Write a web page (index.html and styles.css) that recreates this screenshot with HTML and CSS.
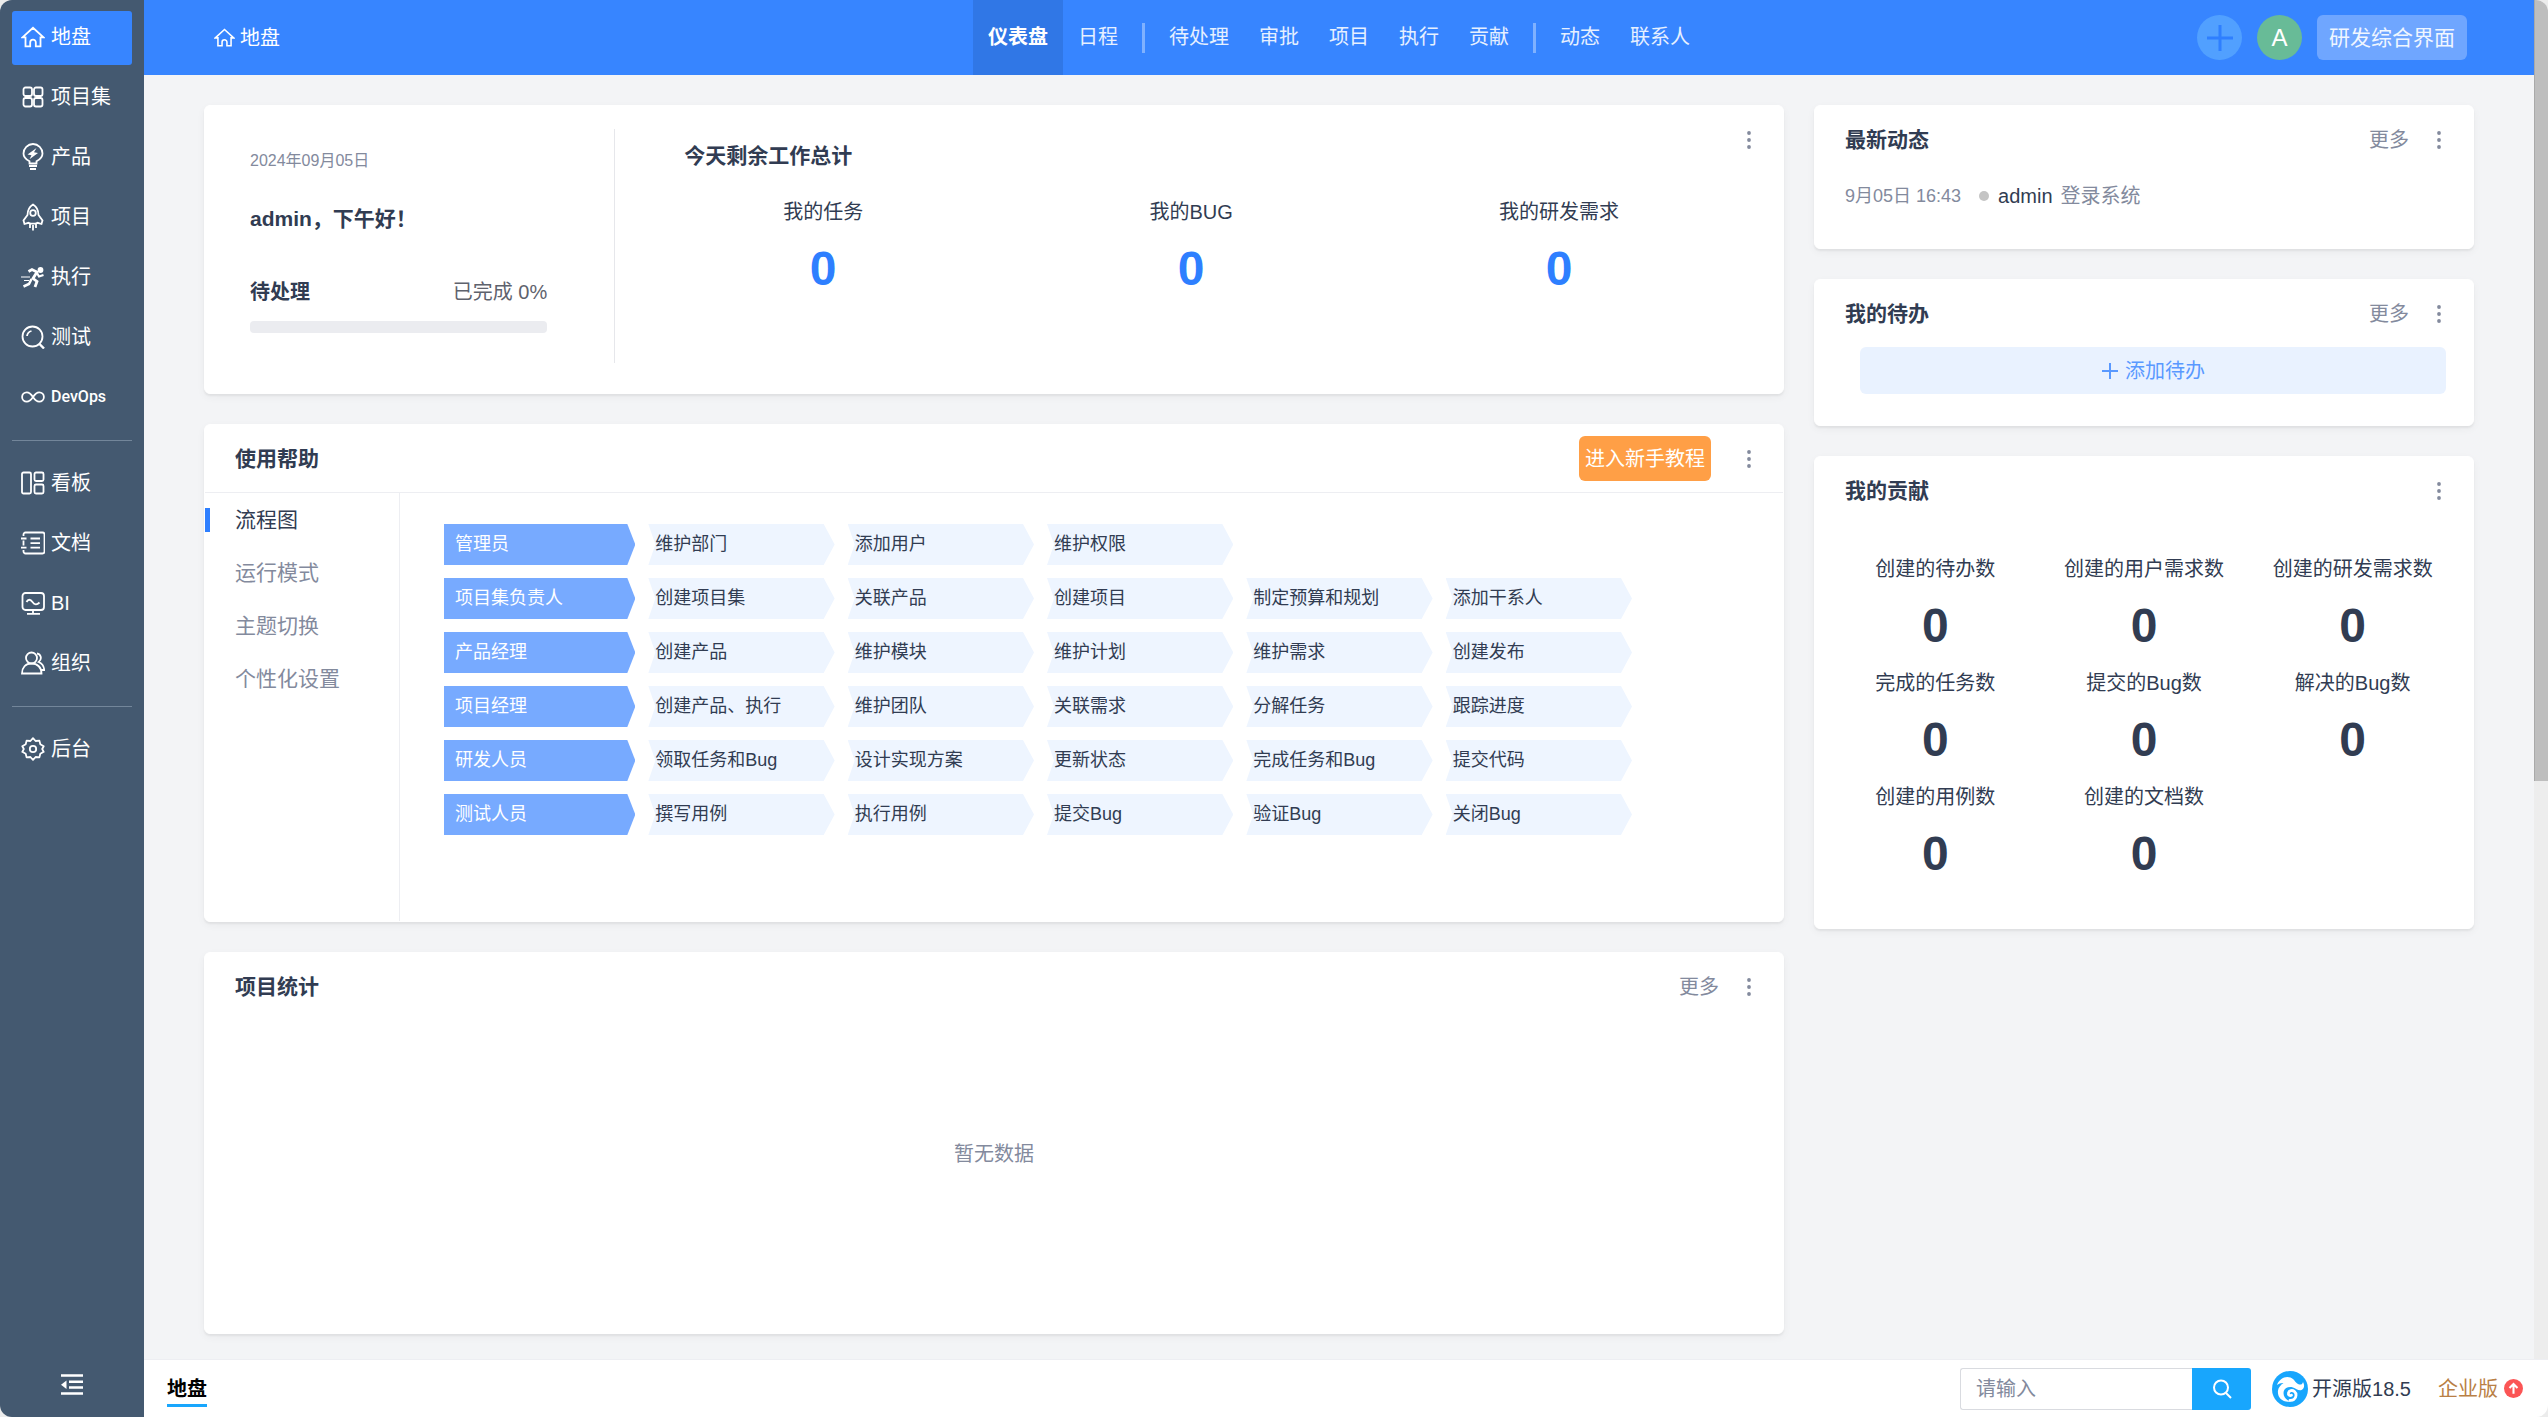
FILE: index.html
```html
<!DOCTYPE html>
<html lang="zh-CN">
<head>
<meta charset="utf-8">
<meta name="viewport" content="width=device-width, initial-scale=1">
<title>地盘 - 仪表盘</title>
<link rel="stylesheet" href="styles.css">
</head>
<body>
<svg class="sprite" aria-hidden="true">
  <symbol id="i-home" viewBox="0 0 24 24"><path d="M1.5 12.4 12 2.8l10.5 9.6h-3v9h-4.7v-4a2.8 2.8 0 0 0-5.6 0v4H4.500v-9z"/></symbol>
  <symbol id="i-program" viewBox="0 0 24 24"><rect x="2.500" y="2.500" width="8.500" height="8.500" rx="2"/><rect x="13" y="2.500" width="8.500" height="8.500" rx="2"/><rect x="2.500" y="13" width="8.500" height="8.500" rx="2"/><rect x="13" y="13" width="8.500" height="8.500" rx="2"/></symbol>
  <symbol id="i-kebab" viewBox="0 0 6 20"><g fill="currentColor" stroke="none"><circle cx="3" cy="3" r="1.900"/><circle cx="3" cy="10" r="1.900"/><circle cx="3" cy="17" r="1.900"/></g></symbol>
</svg>
<div class="shell">
  <aside class="sidebar">
    <nav aria-label="主导航">
      <ul class="side-list">
        <li><a class="side-link active" href="#"><svg class="icon"><use href="#i-home"/></svg>地盘</a></li>
        <li><a class="side-link" href="#"><svg class="icon"><use href="#i-program"/></svg>项目集</a></li>
        <li><a class="side-link" href="#"><svg class="icon tall" viewBox="0 0 24 28"><path d="M8.500 20.500v-2.200C5 16.500 2.500 14 2.500 10.500a9.500 9.500 0 0 1 19 0c0 3.500-2.500 6-6 7.800v2.200z"/><path d="M8 23h8M9 26h6"/><path class="solid" d="M15.500 5 6.500 11.500l4 .8-2 4L17 10l-4-.8z"/></svg>产品</a></li>
        <li><a class="side-link" href="#"><svg class="icon tall" viewBox="0 0 24 28"><path d="M12 1.500c4 2.500 5.500 6.500 5.500 10.500l4 5.500-1 3.500-4-1.200c-3 1.200-6 1.200-9 0L3.500 21l-1-3.500 4-5.500C6.500 8 8 4 12 1.500z"/><circle cx="12" cy="10" r="2.800"/><path d="M9 21v4M12 22v5.500M15 21v4"/></svg>项目</a></li>
        <li><a class="side-link" href="#"><svg class="icon" viewBox="0 0 24 24"><circle class="solid" cx="19.500" cy="5" r="2.900"/><path d="M7.500 6.500 11 4.500l5 2.500-4 6.500 4 3-2 5.500" stroke-width="2.800"/><path d="m10.500 14-2.500 5-5.500 2.500" stroke-width="2.500"/><path d="m16 8 2 3.500 4.500-1.500" stroke-width="2.200"/><path d="M0 12h9M3 15.500h5" stroke-width="1.200"/></svg>执行</a></li>
        <li><a class="side-link" href="#"><svg class="icon" viewBox="0 0 24 24"><circle cx="11.500" cy="11.500" r="10"/><path d="m18.500 19 4.500 4.500" stroke-width="2.400"/><path d="M6 11a6 6 0 0 1 4.500-5"/></svg>测试</a></li>
        <li><a class="side-link latin" href="#"><svg class="icon" viewBox="0 0 24 24"><path d="M12 12c-2-3-3.800-4.700-6.200-4.700a4.700 4.700 0 0 0 0 9.400c2.400 0 4.200-1.700 6.200-4.700s3.800-4.700 6.200-4.700a4.700 4.700 0 0 1 0 9.400c-2.400 0-4.200-1.700-6.200-4.700z"/></svg>DevOps</a></li>
      </ul>
      <ul class="side-list">
        <li><a class="side-link" href="#"><svg class="icon" viewBox="0 0 24 24"><rect x="1" y="1.500" width="9" height="21" rx="1.500"/><rect x="13.500" y="1.500" width="9" height="8.500" rx="1.500"/><rect x="13.500" y="13.500" width="9" height="9" rx="1.500"/></svg>看板</a></li>
        <li><a class="side-link" href="#"><svg class="icon" viewBox="0 0 24 24"><path d="M2.500 5V3.500a2 2 0 0 1 2-2h17a2 2 0 0 1 2 2v17a2 2 0 0 1-2 2h-17a2 2 0 0 1-2-2V19M2.500 9.500v5M0 7.500h5.500M0 16.700h5.500M9.500 7.500h9.500M9.500 12.200h9.500M9.500 16.700h9.500"/></svg>文档</a></li>
        <li><a class="side-link" href="#"><svg class="icon" viewBox="0 0 24 24"><rect x="1.500" y="2" width="21.500" height="17" rx="3"/><path d="M5.500 11c1.500-3 4-3 6 0s4.500 3 7 .5M12 19v3.500M6 22.800h13"/></svg>BI</a></li>
        <li><a class="side-link" href="#"><svg class="icon" viewBox="0 0 24 24"><circle cx="10.500" cy="7" r="5.500"/><path d="M1 22.500c0-6 3.500-10 9.500-10s10 4 10 10zM16 2.500c3.800.5 5.500 5.500 1.700 8.500 3.500 1.500 5.300 4.500 5.500 8h-2.500"/></svg>组织</a></li>
      </ul>
      <ul class="side-list">
        <li><a class="side-link" href="#"><svg class="icon" viewBox="0 0 24 24"><path stroke-linejoin="round" d="M12 1.200 14.600 4l3.800-.4.900 3.700 3.400 1.900L21.200 12l1.500 2.800-3.400 1.900-.9 3.700-3.800-.4L12 22.800 9.400 20l-3.800.4-.9-3.700-3.400-1.900L2.800 12 1.300 9.200l3.400-1.900.9-3.700 3.800.4z"/><circle cx="12" cy="12" r="3.200"/></svg>后台</a></li>
      </ul>
    </nav>
    <button class="collapse" type="button" aria-label="收起导航"><svg class="icon" viewBox="0 0 24 24"><path d="M1 2.500h22M9 8.800h14M9 14.500h14M1 20.500h22" stroke-width="2.600"/><path class="solid" d="M6.500 7.500v8.500L1 11.700z"/></svg></button>
  </aside>

  <div class="workspace">
    <div class="viewport">
      <div class="page">
        <header class="topbar">
          <a class="brand" href="#"><svg class="icon small"><use href="#i-home"/></svg>地盘</a>
          <nav class="tabs" aria-label="地盘导航">
            <a class="tab current" href="#">仪表盘</a>
            <a class="tab" href="#">日程</a>
            <span class="sep"></span>
            <a class="tab" href="#">待处理</a>
            <a class="tab" href="#">审批</a>
            <a class="tab" href="#">项目</a>
            <a class="tab" href="#">执行</a>
            <a class="tab" href="#">贡献</a>
            <span class="sep"></span>
            <a class="tab" href="#">动态</a>
            <a class="tab" href="#">联系人</a>
          </nav>
          <div class="tools">
            <button class="round add" type="button" aria-label="新建"><svg class="plus-lg" viewBox="0 0 26 26"><path d="M13 0v26M0 13h26"/></svg></button>
            <button class="round avatar" type="button">A</button>
            <button class="vision" type="button">研发综合界面</button>
          </div>
        </header>

        <main class="board">
          <div class="column">
            <section class="card overview">
              <div class="greeting">
                <p class="date">2024年09月05日</p>
                <h2 class="title hello">admin，下午好！</h2>
                <div class="pending"><strong>待处理</strong><span>已完成 0%</span></div>
                <div class="bar" role="progressbar" aria-valuenow="0" aria-valuemin="0" aria-valuemax="100"></div>
              </div>
              <div class="summary">
                <h2 class="title">今天剩余工作总计</h2>
                <dl class="stats blue">
                  <div><dt>我的任务</dt><dd>0</dd></div>
                  <div><dt>我的BUG</dt><dd>0</dd></div>
                  <div><dt>我的研发需求</dt><dd>0</dd></div>
                </dl>
              </div>
              <div class="corner"><button class="kebab" type="button" aria-label="菜单"><svg><use href="#i-kebab"/></svg></button></div>
            </section>

            <section class="card">
              <div class="card-head ruled">
                <h2 class="title">使用帮助</h2>
                <button class="tutorial" type="button">进入新手教程</button>
                <button class="kebab" type="button" aria-label="菜单"><svg><use href="#i-kebab"/></svg></button>
              </div>
              <div class="guide">
                <ul class="guide-nav">
                  <li><a class="on" href="#">流程图</a></li>
                  <li><a href="#">运行模式</a></li>
                  <li><a href="#">主题切换</a></li>
                  <li><a href="#">个性化设置</a></li>
                </ul>
                <div class="flow">
                  <ol><li class="role">管理员</li><li>维护部门</li><li>添加用户</li><li>维护权限</li></ol>
                  <ol><li class="role">项目集负责人</li><li>创建项目集</li><li>关联产品</li><li>创建项目</li><li>制定预算和规划</li><li>添加干系人</li></ol>
                  <ol><li class="role">产品经理</li><li>创建产品</li><li>维护模块</li><li>维护计划</li><li>维护需求</li><li>创建发布</li></ol>
                  <ol><li class="role">项目经理</li><li>创建产品、执行</li><li>维护团队</li><li>关联需求</li><li>分解任务</li><li>跟踪进度</li></ol>
                  <ol><li class="role">研发人员</li><li>领取任务和Bug</li><li>设计实现方案</li><li>更新状态</li><li>完成任务和Bug</li><li>提交代码</li></ol>
                  <ol><li class="role">测试人员</li><li>撰写用例</li><li>执行用例</li><li>提交Bug</li><li>验证Bug</li><li>关闭Bug</li></ol>
                </div>
              </div>
            </section>

            <section class="card">
              <div class="card-head">
                <h2 class="title">项目统计</h2>
                <a class="more" href="#">更多</a>
                <button class="kebab" type="button" aria-label="菜单"><svg><use href="#i-kebab"/></svg></button>
              </div>
              <p class="empty">暂无数据</p>
            </section>
          </div>

          <div class="column">
            <section class="card">
              <div class="card-head">
                <h2 class="title">最新动态</h2>
                <a class="more" href="#">更多</a>
                <button class="kebab" type="button" aria-label="菜单"><svg><use href="#i-kebab"/></svg></button>
              </div>
              <ul class="feed">
                <li><time>9月05日 16:43</time><i class="dot"></i><b>admin</b><span>登录系统</span></li>
              </ul>
            </section>

            <section class="card">
              <div class="card-head">
                <h2 class="title">我的待办</h2>
                <a class="more" href="#">更多</a>
                <button class="kebab" type="button" aria-label="菜单"><svg><use href="#i-kebab"/></svg></button>
              </div>
              <div class="todo"><button class="add-todo" type="button"><svg viewBox="0 0 18 18"><path d="M9 1v16M1 9h16"/></svg>添加待办</button></div>
            </section>

            <section class="card">
              <div class="card-head">
                <h2 class="title">我的贡献</h2>
                <button class="kebab" type="button" aria-label="菜单"><svg><use href="#i-kebab"/></svg></button>
              </div>
              <dl class="stats contrib">
                <div><dt>创建的待办数</dt><dd>0</dd></div>
                <div><dt>创建的用户需求数</dt><dd>0</dd></div>
                <div><dt>创建的研发需求数</dt><dd>0</dd></div>
                <div><dt>完成的任务数</dt><dd>0</dd></div>
                <div><dt>提交的Bug数</dt><dd>0</dd></div>
                <div><dt>解决的Bug数</dt><dd>0</dd></div>
                <div><dt>创建的用例数</dt><dd>0</dd></div>
                <div><dt>创建的文档数</dt><dd>0</dd></div>
              </dl>
            </section>
          </div>
        </main>
      </div>
      <div class="scroll-track"><div class="scroll-thumb"></div></div>
    </div>

    <footer class="dock">
      <a class="dock-tab" href="#">地盘</a>
      <form class="search">
        <input type="text" placeholder="请输入" aria-label="搜索">
        <button type="button" aria-label="搜索"><svg viewBox="0 0 20 20"><circle cx="9" cy="8.500" r="7"/><path d="m14 14 5 5"/></svg></button>
      </form>
      <a class="edition" href="#"><svg class="logo" viewBox="0 0 36 36"><circle cx="18" cy="18" r="18" fill="#18a6fd"/><path fill="#fff" d="M5 14C7 8 13 4.500 18.500 6.500c4 1.500 4.500 5 7.500 6.500 2.500 1.200 4.500.5 5-2 1.800 3 1.500 7-1.500 8-3 1-5.500-1.500-8.500-2.500-5-1.500-9.500 1-9.500 5.500 0 4 3 7.500 7.500 8.500C11 32 5 27 6 19.500c.5-3 2.500-5.500 5.500-7.500-2.500-.2-4.500.5-6.500 2z"/><path fill="none" stroke="#fff" stroke-width="2.800" stroke-linecap="round" d="M19.500 24.300c-1.800.8-3.500-.6-3-2.500.6-2.300 3.800-3 5.800-1.400 2.500 2 2.200 6-.3 7.900-1.200.9-2.500 1.200-4 1"/></svg>开源版18.5</a>
      <a class="upgrade" href="#">企业版<svg viewBox="0 0 20 20"><circle cx="10" cy="10" r="10" fill="#fb5555"/><path d="M10 15.500V6M5.800 9.500 10 5.300l4.200 4.200" fill="none" stroke="#fff" stroke-width="2.200"/></svg></a>
    </footer>
  </div>
</div>
</body>
</html>
```
FILE: styles.css
```css
* { box-sizing: border-box; }

body {
  margin: 0;
  background: #ececec;
  color: #313c52;
  font: 20px/30px "Liberation Sans", "Noto Sans CJK SC", sans-serif;
}

h2, p, ul, ol, dl, dd { margin: 0; padding: 0; }
ul, ol { list-style: none; }
a { color: inherit; text-decoration: none; }
button { border: 0; padding: 0; background: none; color: inherit; font: inherit; cursor: pointer; }
svg { display: block; flex: none; }
.sprite { display: none; }

.icon {
  width: 24px;
  height: 24px;
  fill: none;
  stroke: currentColor;
  stroke-width: 1.8;
}
.icon.small { width: 21px; height: 21px; }
.icon.tall { height: 28px; }
.icon .solid { fill: currentColor; stroke: none; }

.shell {
  display: flex;
  min-height: 100vh;
  overflow: hidden;
  border-radius: 12px;
}

/* Left navigation */
.sidebar {
  flex: none;
  display: flex;
  flex-direction: column;
  justify-content: space-between;
  width: 144px;
  padding: 11px 12px 20px;
  background: #445970;
  color: #fff;
}
.side-list { display: grid; gap: 6px; }
.side-list + .side-list {
  margin-top: 15px;
  padding-top: 16px;
  border-top: 1px solid #73869a;
}
.side-link {
  display: flex;
  align-items: center;
  gap: 6px;
  height: 54px;
  padding: 0 0 3px 9px;
  border-radius: 3px;
}
.side-link.active { background: #3785ff; }
.side-link.latin { font-family: Roboto, sans-serif; font-size: 16px; font-weight: 500; }
.collapse { align-self: center; }

.workspace {
  flex: 1;
  display: flex;
  flex-direction: column;
  min-width: 0;
}
.viewport { flex: 1; display: flex; background: #f3f4f6; }
.page { flex: 1; min-width: 0; }
.scroll-track { display: flex; flex-direction: column; width: 14px; background: #ededed; }
.scroll-track::after { content: ""; flex: 20; }
.scroll-thumb { flex: 27; background: #bebebe; border-left: 1px solid #a9a9a9; }

/* Top bar */
.topbar {
  display: grid;
  grid-template-columns: 1fr auto 1fr;
  align-items: center;
  height: 75px;
  padding: 0 67px;
  background: #3785ff;
  color: #fff;
}
.brand { display: flex; align-items: center; gap: 5px; padding-left: 3px; }
.tabs { display: flex; align-items: center; }
.tab { padding: 0 15px; line-height: 75px; color: #e6f0ff; }
.tab.current { background: #3077e6; color: #fff; font-weight: 700; }
.sep { width: 3px; height: 30px; margin: 0 9px; background: #7fb1ff; }
.tools { display: flex; justify-content: flex-end; align-items: center; gap: 15px; }
.round { width: 45px; height: 45px; border-radius: 50%; }
.add { display: grid; place-items: center; background: #51a0ff; }
.plus-lg { width: 26px; height: 26px; fill: none; stroke: #2e7fff; stroke-width: 3; }
.avatar { background: #68bb97; color: #fff; font-size: 24px; }
.vision {
  height: 45px;
  padding: 0 12px;
  border-radius: 6px;
  background: #6fa6ff;
  color: #f0f6ff;
  font-size: 21px;
}

/* Dashboard grid */
.board {
  display: grid;
  grid-template-columns: 79fr 33fr;
  align-items: start;
  gap: 30px;
  padding: 30px 60px 25px;
}
.column { display: grid; gap: 30px; min-width: 0; }
.card {
  border: 1px solid #fff;
  border-radius: 6px;
  background: #fff;
  box-shadow: 0 2px 2px rgba(0, 0, 0, .05), 0 3px 9px rgba(0, 0, 0, .045);
}
.title { font-size: 21px; font-weight: 700; line-height: 30px; }
.card-head {
  display: flex;
  align-items: center;
  height: 67px;
  padding: 0 28px 0 30px;
}
.card-head.ruled { box-sizing: content-box; border-bottom: 1px solid #edeef2; }
.card-head .title { flex: 1; }
.more { color: #838a9d; }
.kebab { width: 12px; height: 30px; margin-left: 24px; color: #838a9d; }
.kebab svg { width: 6px; height: 20px; margin: 0 auto; }

/* Overview card */
.overview { display: flex; }
.greeting {
  flex: 0 0 26%;
  margin: 23px 0 30px;
  padding: 20px 67px 30px 45px;
  border-right: 1px solid #e6e7eb;
}
.date { color: #838a9d; font-size: 16px; line-height: 24px; }
.hello { margin-top: 31px; }
.pending { display: flex; justify-content: space-between; margin-top: 43px; color: #5e626d; }
.pending strong { color: #313c52; }
.bar { height: 12px; margin-top: 14px; border-radius: 4px; background: #ebecf0; }
.summary { flex: 1; padding: 35px 0 0 24px; }
.summary .title { padding-left: 45px; margin-bottom: 26px; }
.corner { display: flex; align-items: center; height: 67px; padding-right: 28px; }
.corner .kebab { margin-left: 0; }

.stats {
  display: grid;
  grid-template-columns: repeat(3, 1fr);
  row-gap: 17px;
  text-align: center;
}
.stats dd { margin-top: 17px; font-size: 48px; font-weight: 700; line-height: 50px; }
.stats.blue dd { color: #2e7fff; }
.stats.contrib { padding: 30px 16px 49px; }

/* Help card */
.tutorial {
  height: 45px;
  padding: 0 6px;
  border-radius: 6px;
  background: #ff9f46;
  color: #fff;
}
.tutorial + .kebab { margin-left: 32px; }
.guide { display: flex; }
.guide-nav {
  flex: none;
  width: 195px;
  border-right: 1px solid #edeef2;
}
.guide-nav a {
  display: flex;
  align-items: center;
  height: 53px;
  padding-left: 30px;
  color: #838a9d;
  font-size: 21px;
}
.guide-nav a.on { padding-left: 0; color: #313c52; }
.guide-nav a.on::before {
  content: "";
  width: 5px;
  height: 24px;
  margin-right: 25px;
  background: #2e7fff;
}
.flow { flex: 1; display: grid; gap: 13px; padding: 31px 151px 86px 44px; }
.flow ol {
  display: grid;
  grid-template-columns: 191fr repeat(5, 186fr);
  gap: 13px;
}
.flow li {
  padding-left: 7px;
  background: #eef5ff;
  font-size: 18px;
  line-height: 41px;
  white-space: nowrap;
  clip-path: polygon(0 0, calc(100% - 11px) 0, 100% 50%, calc(100% - 11px) 100%, 0 100%, 7px 50%);
}
.flow li.role {
  padding-left: 11px;
  background: #77aaff;
  color: #fff;
  clip-path: polygon(0 0, calc(100% - 8px) 0, 100% 50%, calc(100% - 8px) 100%, 0 100%);
}

.empty { padding: 119px 0 164px; color: #838a9d; text-align: center; }

/* Right column */
.feed { padding: 8px 30px 37px; }
.feed li { display: flex; align-items: center; color: #838a9d; }
.feed time { font-size: 18px; }
.dot { width: 10px; height: 10px; margin: 0 9px 0 18px; border-radius: 50%; background: #c4c4c4; }
.feed b { margin-right: 8px; color: #313c52; font-weight: 400; }
.todo { padding: 0 27px 31px 45px; }
.add-todo {
  display: flex;
  align-items: center;
  justify-content: center;
  gap: 6px;
  width: 100%;
  height: 47px;
  border-radius: 6px;
  background: #e9f2ff;
  color: #5999ff;
}
.add-todo svg { width: 18px; height: 18px; fill: none; stroke: currentColor; stroke-width: 2; }

/* Bottom dock */
.dock {
  display: flex;
  align-items: center;
  height: 58px;
  padding: 0 25px 0 23px;
  background: #fff;
  border-top: 1px solid #edeef2;
}
.dock-tab {
  margin-right: auto;
  padding-top: 3px;
  border-bottom: 3px solid #18a6fd;
  color: #000;
  font-weight: 700;
}
.search { display: flex; height: 42px; margin-right: 21px; }
.search input {
  width: 232px;
  padding: 0 15px;
  border: 1px solid #d9dbe0;
  border-right: 0;
  border-radius: 3px 0 0 3px;
  color: #313c52;
  font: inherit;
}
.search input::placeholder { color: #838a9d; }
.search button {
  display: grid;
  place-items: center;
  width: 59px;
  border-radius: 0 3px 3px 0;
  background: #18a6fd;
}
.search button svg { width: 20px; height: 20px; fill: none; stroke: #fff; stroke-width: 2; }
.edition { display: flex; align-items: center; gap: 4px; margin-right: 27px; }
.logo { width: 36px; height: 36px; }
.upgrade { display: flex; align-items: center; gap: 6px; color: #b97f45; }
.upgrade svg { width: 19px; height: 19px; }
```
